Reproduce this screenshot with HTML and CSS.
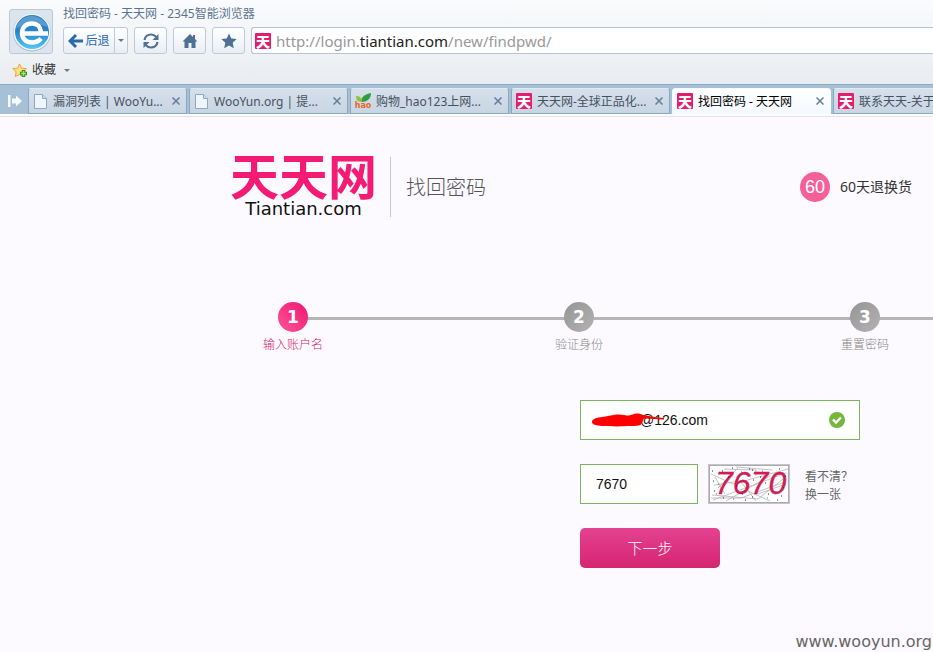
FILE: index.html
```html
<!DOCTYPE html>
<html lang="zh-CN">
<head>
<meta charset="utf-8">
<title>找回密码 - 天天网</title>
<link rel="stylesheet" href="styles.css">
</head>
<body>
<div class="window">
  <header class="chrome">
    <div class="toolbar">
      <div class="app-icon">
        <svg width="44" height="44" viewBox="0 0 44 44" aria-hidden="true">
          <defs>
            <linearGradient id="orb" x1="0" y1="0" x2="0" y2="1"><stop offset="0" stop-color="#2f80bd"/><stop offset=".5" stop-color="#2584c8"/><stop offset="1" stop-color="#55c8f5"/></linearGradient>
          </defs>
          <circle cx="22" cy="22.500" r="19" fill="#a9bccb"/>
          <circle cx="22" cy="22" r="18.500" fill="#f1f6fa"/>
          <circle cx="22" cy="22" r="17" fill="url(#orb)"/>
          <path d="M6 18C9 9 16 6 22 6s13 4 16 11C28 13 16 14 6 18z" fill="#fff" opacity=".22"/>
          <path fill="none" stroke="#fff" stroke-width="4.500" d="M12 23.500h26M31 22c-.5-5.500-4-8.500-9-8.500-6 0-10 4-10 9.500s4 9.500 10 9.500c4 0 7-1.500 9-4"/>
        </svg>
      </div>
      <div class="toolbar-main">
        <div class="window-title">找回密码 - 天天网 - 2345智能浏览器</div>
        <div class="controls">
          <div class="split">
            <button type="button" class="tool back">
              <svg width="15" height="16" viewBox="0 0 15 16" aria-hidden="true"><path d="M8 2 2 8l6 6M2 8h13" fill="none" stroke="#2869b0" stroke-width="3"/></svg>
              <span>后退</span>
            </button>
            <button type="button" class="tool more" aria-label="历史"><span class="caret"></span></button>
          </div>
          <button type="button" class="tool" aria-label="刷新">
            <svg width="18" height="18" viewBox="0 0 18 18" aria-hidden="true"><path d="M2.500 8C3 4.500 6 2.500 9 2.500c2 0 3.700.8 5 2.200M15.500 10c-.5 3.500-3.500 5.500-6.500 5.500-2 0-3.700-.8-5-2.200" fill="none" stroke="#4f6f94" stroke-width="2.200"/><path d="M16.500 2v6h-6zM1.500 16v-6h6z" fill="#4f6f94"/></svg>
          </button>
          <button type="button" class="tool" aria-label="主页">
            <svg width="16" height="16" viewBox="0 0 16 16" aria-hidden="true"><path d="M8 1 .5 8.500h2V15h4v-5h3v5h4V8.500h2L13 6V2h-2v2z" fill="#4f6f94"/></svg>
          </button>
          <button type="button" class="tool" aria-label="收藏">
            <svg width="16" height="16" viewBox="0 0 16 16" aria-hidden="true"><path d="m8 .5 2.300 5 5.400.6-4 3.700 1.100 5.400L8 12.500l-4.800 2.700 1.100-5.400-4-3.700 5.400-.6z" fill="#4f6f94"/></svg>
          </button>
          <div class="address">
            <span class="favicon">天</span>
            <a class="url" href="#">http://login.<b>tiantian.com</b>/new/findpwd/</a>
          </div>
        </div>
      </div>
    </div>
    <div class="bookmarks">
      <button type="button" class="bookmark">
        <svg width="16" height="15" viewBox="0 0 16 15" aria-hidden="true"><path d="m7.500 1 2 4.200 4.800.4-3.400 3.300.8 4.700-4.200-2.200-4.200 2.200.8-4.700L.8 5.600l4.700-.4z" fill="#ffdf83" stroke="#e8a540"/><path d="M11.500 7v7M8 10.500h7" stroke="#398c20" stroke-width="3.500"/><path d="M11.500 8v5M9 10.500h5" stroke="#a5e46a" stroke-width="1.500"/></svg>
        <span>收藏</span><span class="caret"></span>
      </button>
    </div>
    <nav class="tabs">
      <button type="button" class="tab-toggle" aria-label="标签列表">
        <svg width="14" height="12" viewBox="0 0 14 12" aria-hidden="true"><path d="M0 0h2.500v12H0zM4 3.500h4V.5L14 6l-6 5.500v-3H4z" fill="#f6fafd"/></svg>
      </button>
      <div class="tab">
        <svg class="page-icon" width="13" height="15" viewBox="0 0 13 15" aria-hidden="true"><path d="M.5.5h8l4 4v10H.5z" fill="#eef5fb" stroke="#8ea9bf"/><path d="M8.500.5v4h4" fill="#cfdfec" stroke="#8ea9bf"/></svg>
        <a href="#">漏洞列表 | WooYu...</a><button type="button" class="close" aria-label="关闭"><svg width="8" height="8" viewBox="0 0 8 8"><path d="m.5.500 7 7m0-7-7 7"/></svg></button>
      </div>
      <div class="tab">
        <svg class="page-icon" width="13" height="15" viewBox="0 0 13 15" aria-hidden="true"><path d="M.5.5h8l4 4v10H.5z" fill="#eef5fb" stroke="#8ea9bf"/><path d="M8.500.5v4h4" fill="#cfdfec" stroke="#8ea9bf"/></svg>
        <a href="#">WooYun.org | 提...</a><button type="button" class="close" aria-label="关闭"><svg width="8" height="8" viewBox="0 0 8 8"><path d="m.5.500 7 7m0-7-7 7"/></svg></button>
      </div>
      <div class="tab">
        <svg width="16" height="16" viewBox="0 0 16 16" aria-hidden="true"><path d="M6 9C6 4 10 1 16 0c0 6-4 9-10 9z" fill="#2f9e3c"/><path d="M7 9C2 9 1 6 1 3c4 0 6 2 6 6z" fill="#8cc43c"/><text x="8" y="15" class="hao" text-anchor="middle">hao</text></svg>
        <a href="#">购物_hao123上网...</a><button type="button" class="close" aria-label="关闭"><svg width="8" height="8" viewBox="0 0 8 8"><path d="m.5.500 7 7m0-7-7 7"/></svg></button>
      </div>
      <div class="tab">
        <span class="favicon">天</span>
        <a href="#">天天网-全球正品化...</a><button type="button" class="close" aria-label="关闭"><svg width="8" height="8" viewBox="0 0 8 8"><path d="m.5.500 7 7m0-7-7 7"/></svg></button>
      </div>
      <div class="tab active">
        <span class="favicon">天</span>
        <a href="#">找回密码 - 天天网</a><button type="button" class="close" aria-label="关闭"><svg width="8" height="8" viewBox="0 0 8 8"><path d="m.5.500 7 7m0-7-7 7"/></svg></button>
      </div>
      <div class="tab">
        <span class="favicon">天</span>
        <a href="#">联系天天-关于</a>
      </div>
    </nav>
  </header>

  <main class="page">
    <div class="masthead">
      <a class="logo" href="#"><span class="logo-cn">天天网</span><span class="logo-en">Tiantian.com</span></a>
      <h1>找回密码</h1>
      <div class="promise"><span class="badge">60</span><span>60天退换货</span></div>
    </div>

    <ol class="steps">
      <li class="current"><span class="num">1</span><span>输入账户名</span></li>
      <li><span class="num">2</span><span>验证身份</span></li>
      <li><span class="num">3</span><span>重置密码</span></li>
    </ol>

    <form class="form">
      <div class="account">
        <input type="text" value="@126.com" aria-label="账户名">
        <svg class="redaction" width="74" height="14" viewBox="0 0 74 14" aria-hidden="true"><path d="M0 8C2 4 10 4.500 16 3S27 1 32 2s5 .5 10-1c4-1 7 0 9 1 6 1 13 2.500 21 3v1.500c-8 0-13-1-20-1l-3 6c-2 1.500-7 1.500-12 1.500-8 .5-18 .5-25 0C6 12.500-1 12 0 8z" fill="#fe0000"/></svg>
        <svg class="valid" width="16" height="16" viewBox="0 0 16 16" aria-hidden="true"><circle cx="8" cy="8" r="8" fill="#75b73d"/><path d="m4 7.500 3 3 5-5" fill="none" stroke="#fff" stroke-width="2.400"/></svg>
      </div>
      <div class="verify">
        <input type="text" value="7670" aria-label="验证码">
        <svg class="captcha" width="82" height="40" viewBox="0 0 82 40" role="img" aria-label="验证码图片">
          <rect x="1" y="1" width="80" height="38" fill="#fff" stroke="#c6c6ca" stroke-width="2"/>
          <rect x="1.500" y="1.500" width="79" height="37" fill="none" stroke="#929296" stroke-dasharray="1 1"/>
          <path d="M3 10 25 20 80 5M5 36l35-13 38-14M10 24l20-20M48 37l-16-20-26 4M4 31l46 4 25-20M16 5l32 1v6M28 3l36 3M40 27l22 10M18 37l44-25M7 13l10 17M50 30l28-10M3 34h30l44-16" fill="none" stroke="#b4b4b4" stroke-width=".8"/>
          <text x="7" y="30" class="digits">7670</text>
          <path d="M4 7h1m9 0h1m9-3h1m19 2h1m26-1h1M5 17h1m22 5h1m16-6h1m11 3h1m17 5h1M6 27h1m8 7h1m18-4h1m9 3h1m15-3h1m8 6h1M20 13h1m31 0h1m20 19h1m3-20h1M37 36h1m3-31h1" stroke="#222"/>
          <path d="M10 20h1m48 14h1M33 8h1m41 17h1" stroke="#1bb084"/>
          <path d="M25 35h1m28-28h1m20 3h1M8 30h1" stroke="#d52a96"/>
        </svg>
        <a class="refresh" href="#">看不清？<br>换一张</a>
      </div>
      <button type="submit" class="next">下一步</button>
    </form>
    <footer class="credit">www.wooyun.org</footer>
  </main>
</div>
</body>
</html>
```
FILE: styles.css
```css
* { box-sizing: border-box; }

body {
  margin: 0;
  overflow: hidden;
  background: #fdfaff;
  color: #333;
  font: 12px/18px "Noto Sans", "Noto Sans CJK SC", sans-serif;
}

a { color: inherit; text-decoration: none; }

button, input { font: inherit; color: inherit; margin: 0; }

button { cursor: pointer; padding: 0; border: 0; background: none; }

svg { display: block; flex: none; }

.window { min-height: 100vh; display: flex; flex-direction: column; }

/* Browser chrome */
.chrome { background: linear-gradient(#fafbfd, #e9ecf0 84px); }

.toolbar { display: flex; gap: 10px; padding: 5px 0 0 9px; }

.app-icon {
  width: 44px;
  height: 45px;
  margin-top: 4px;
  border: 1px solid #b9c9d7;
  border-radius: 3px;
  background: #dce5ed;
  display: grid;
  place-items: center;
  overflow: hidden;
}

.toolbar-main { flex: 1; min-width: 0; }

.window-title { color: #5b7590; height: 22px; }

.controls { display: flex; gap: 6px; }

.tool {
  width: 33px;
  height: 27px;
  border: 1px solid #bccad9;
  border-radius: 3px;
  background: linear-gradient(#fff, #e9eef3);
  display: flex;
  align-items: center;
  justify-content: center;
  gap: 2px;
}

.split { display: flex; }
.back { width: 52px; border-radius: 3px 0 0 3px; color: #2869b0; }
.more { width: 13px; border-left: 0; border-radius: 0 3px 3px 0; }

.caret { border: 3px solid transparent; border-top-color: #66788a; border-bottom: 0; }

.address {
  flex: 1;
  min-width: 0;
  height: 27px;
  padding-left: 3px;
  border: 1px solid #b7c4d3;
  border-right: 0;
  border-radius: 3px 0 0 3px;
  background: #fff;
  display: flex;
  align-items: center;
  gap: 5px;
}

.url { color: #999; font-size: 15px; }
.url b { color: #222; font-weight: 400; }

.favicon {
  width: 16px;
  height: 16px;
  flex: none;
  border-radius: 1px;
  background: #e51b6e;
  color: #fff;
  font: 900 14px/16px "Noto Sans CJK SC", sans-serif;
  text-align: center;
}

.bookmarks { height: 30px; padding: 2px 0 0 12px; display: flex; align-items: center; }
.bookmark { display: flex; align-items: center; gap: 4px; }
.bookmark .caret { margin-left: 4px; }

.tabs {
  height: 33px;
  padding-top: 3px;
  border-top: 1px solid #8aabc4;
  border-bottom: 1px solid #e8e2e5;
  background: linear-gradient(#a5c0d7 29px, #f8fbff 29px);
  display: flex;
  gap: 2px;
  overflow: hidden;
}

.tab-toggle { width: 26px; height: 26px; padding-left: 3px; flex: none; display: grid; place-items: center; }

.tab {
  width: 159px;
  height: 26px;
  flex: none;
  padding: 0 6px 0 4px;
  border: 1px solid #8aa8c0;
  border-top-color: #dfebf4;
  border-radius: 3px 3px 0 0;
  background: linear-gradient(#d6e0ea, #c8d5e3);
  color: #46525f;
  display: flex;
  align-items: center;
  gap: 5px;
}

.tab:last-child { flex: 1; min-width: 0; padding-right: 0; border-right: 0; border-top-right-radius: 0; }
.tab a { flex: 1; min-width: 0; padding-top: 1px; white-space: nowrap; }
.page-icon { margin: 0 1px; }
.tab.active { border-color: #f7fbff; background: linear-gradient(#fff, #f4f9ff); color: #000; }
.close { flex: none; }
.close path { fill: none; stroke: #607e9e; stroke-width: 1.500; }
.hao { font: 700 8px "DejaVu Sans", sans-serif; fill: #ec6420; }

/* Page */
.page { flex: 1; display: flex; flex-direction: column; }

.masthead { display: flex; align-items: center; padding: 40px 21px 0 230px; }

.logo { height: 60px; padding-right: 13px; border-right: 1px solid #c9c7cb; display: flex; flex-direction: column; align-items: center; }
.logo-cn { color: #f41b74; font: 700 49px/34px "Noto Sans CJK SC", sans-serif; }
.logo-en { margin-top: 8px; color: #111; font: 18px/20px "DejaVu Sans", sans-serif; }

h1 { margin: 0 0 0 15px; color: #555; font: 300 20px/30px "Noto Sans CJK SC", sans-serif; }

.promise { margin-left: auto; display: flex; align-items: center; gap: 10px; font-size: 14px; }
.badge {
  width: 30px;
  height: 30px;
  border-radius: 50%;
  background: #f66099;
  color: #fff;
  font: 18px/30px "Liberation Sans", sans-serif;
  text-align: center;
}

.steps {
  list-style: none;
  margin: 85px 0 0 150px;
  padding: 0;
  display: grid;
  grid-template-columns: 286px 286px 1fr;
  color: #888;
  font-weight: 300;
}

.steps li { position: relative; width: 286px; display: flex; flex-direction: column; align-items: center; gap: 4px; }
.steps li:last-child { margin-bottom: 0; }

.steps li::before { content: ""; position: absolute; left: 50%; top: 15px; width: 100%; height: 3px; background: #b5b5b5; }

.num {
  position: relative;
  width: 30px;
  height: 30px;
  border-radius: 50%;
  background: linear-gradient(135deg, #949494, #b3b3b3);
  color: #fff;
  font: 700 17px/30px "DejaVu Sans", sans-serif;
  text-align: center;
}

.steps .current { color: #d4186a; }
.current .num { background: linear-gradient(45deg, #ff5599, #ee1670); }

.form { margin: 46px 0 0 580px; display: flex; flex-direction: column; align-items: flex-start; gap: 24px; }

.form input {
  width: 118px;
  height: 40px;
  padding: 0 15px;
  border: 1px solid #7db565;
  background: #fff;
  color: #111;
  font: 14px "Liberation Sans", sans-serif;
}

.account { position: relative; }
.account input { width: 280px; padding-left: 59px; }
.redaction { position: absolute; left: 12px; top: 13px; }
.valid { position: absolute; right: 15px; top: 12px; }

.verify { display: flex; align-items: center; }
.captcha { margin: 0 15px 0 10px; }
.digits { font: italic 32px "Liberation Sans", sans-serif; fill: #d51b52; stroke: #b92165; stroke-width: .3; }
.refresh { padding-top: 2px; color: #666; font-family: "Noto Sans CJK SC", sans-serif; }

.form .next {
  width: 140px;
  height: 40px;
  border-radius: 5px;
  background: linear-gradient(#e34291, #d62471);
  color: #fff;
  font: 300 15px/40px "Noto Sans CJK SC", sans-serif;
}

.credit { margin-top: auto; padding-right: 1px; color: #666; font: 16px/20px "DejaVu Sans", sans-serif; text-align: right; }
```
